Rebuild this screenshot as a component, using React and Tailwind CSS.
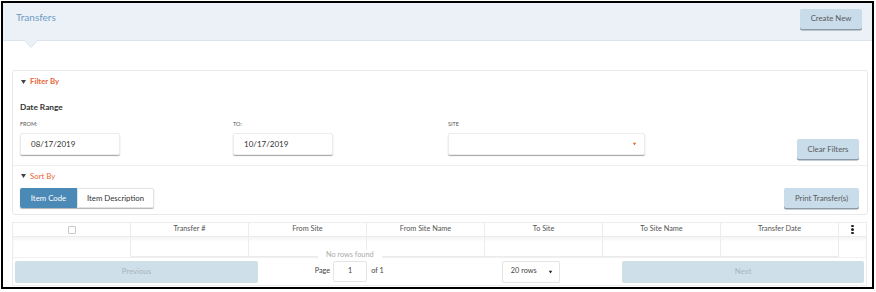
const cols = ["Transfer #", "From Site", "From Site Name", "To Site", "To Site Name", "Transfer Date"]

const Caret = ({ className }) => (
  <svg width="5" height="4" viewBox="0 0 5 4" className={className}>
    <path d="M0 0 L5 0 L2.5 4 Z" fill="currentColor" />
  </svg>
)

const App = () => {
  return (
    <div className="w-[876px] h-[292px] bg-white pl-px pt-px font-['Lato','Liberation_Sans',sans-serif]">
      <div className="w-[873px] h-[288px] border-2 border-black flex flex-col overflow-hidden">
        {/* page header */}
        <div className="h-[38px] shrink-0 bg-[#ebf1f6] border-b border-[#d9e4ee] flex items-start justify-between pl-[13px] pr-[10px] pt-[6px]">
          <span className="text-[10px] text-[#6b9cc6] mt-[1px]">Transfers</span>
          <button className="w-[62px] h-[20px] bg-[#c8dcea] rounded-[2px] shadow-[0_1.5px_0_#8c9aa6] text-[7.8px] text-[#5a5a5a]">
            Create New
          </button>
        </div>
        <div className="h-[29px] shrink-0 relative">
          <svg width="14" height="8" viewBox="0 0 14 8" className="absolute left-[21px] -top-px">
            <path d="M0 0 L7 7.5 L14 0" fill="#ebf1f6" stroke="#d9e4ee" strokeWidth="1" />
          </svg>
        </div>

        {/* filter card */}
        <div className="ml-[9px] w-[856px] h-[145px] shrink-0 border border-[#e6e8ea] rounded-[3px] flex flex-col">
          <div className="flex items-center gap-[4px] pl-[8px] pt-[6px] h-[16px] text-[#e8673b]">
            <Caret className="text-[#444]" />
            <span className="text-[7.8px] font-bold">Filter By</span>
          </div>
          <div className="pl-[7px] pt-[14px] text-[8.3px] font-bold text-[#333]">Date Range</div>
          <div className="flex pl-[7px] pt-[7px] pr-[8px]">
            <div className="w-[213px]">
              <div className="text-[5.5px] text-[#555] h-[13px] leading-[8px]">FROM:</div>
              <div className="w-[100px] h-[22px] border border-[#ececec] shadow-[0_1px_1px_rgba(0,0,0,0.35)] rounded-[2px] flex items-center pl-[10px] text-[8px] text-[#333]">
                08/17/2019
              </div>
            </div>
            <div className="w-[215px]">
              <div className="text-[5.5px] text-[#555] h-[13px] leading-[8px]">TO:</div>
              <div className="w-[100px] h-[22px] border border-[#ececec] shadow-[0_1px_1px_rgba(0,0,0,0.35)] rounded-[2px] flex items-center pl-[10px] text-[8px] text-[#333]">
                10/17/2019
              </div>
            </div>
            <div className="w-[197px]">
              <div className="text-[5.5px] text-[#555] h-[13px] leading-[8px]">SITE</div>
              <div className="w-[197px] h-[22px] border border-[#ececec] shadow-[0_1px_1px_rgba(0,0,0,0.35)] rounded-[2px] flex items-center justify-end pr-[7px]">
                <Caret className="text-[#e8673b] scale-75" />
              </div>
            </div>
            <div className="flex-1 flex justify-end items-end">
              <button className="w-[62px] h-[20px] mb-[-4px] bg-[#c8dcea] rounded-[2px] shadow-[0_1.5px_0_#8c9aa6] text-[7.8px] text-[#5a5a5a]">
                Clear Filters
              </button>
            </div>
          </div>
          <div className="mt-[10px] border-t border-[#eeeeee]" />
          <div className="flex items-center gap-[4px] pl-[8px] pt-[5px] h-[15px] text-[#e8673b]">
            <Caret className="text-[#444]" />
            <span className="text-[7.8px]">Sort By</span>
          </div>
          <div className="flex items-center justify-between pl-[7px] pr-[8px] pt-[7px]">
            <div className="flex h-[20px] shadow-[0_1px_1px_rgba(0,0,0,0.3)] rounded-[2px]">
              <div className="w-[57px] bg-[#4b89b7] text-white text-[7.8px] flex items-center justify-center rounded-l-[2px]">
                Item Code
              </div>
              <div className="w-[77px] border border-[#e2e2e2] text-[#333] text-[7.8px] flex items-center justify-center rounded-r-[2px]">
                Item Description
              </div>
            </div>
            <button className="w-[75px] h-[20px] bg-[#c8dcea] rounded-[2px] shadow-[0_1.5px_0_#8c9aa6] text-[7.8px] text-[#5a5a5a]">
              Print Transfer(s)
            </button>
          </div>
        </div>

        {/* table */}
        <div className="ml-[9px] mt-[7px] w-[855px] border border-[#ececec] flex flex-col">
          <div className="flex h-[14px] border-b border-[#ececec]">
            <div className="w-[118px] border-r border-[#ececec] flex items-center justify-center">
              <div className="w-[8px] h-[8px] border border-[#c8c8c8] rounded-[1px]" />
            </div>
            {cols.map((c) => (
              <div key={c} className="w-[118px] border-r border-[#ececec] flex items-center justify-center text-[7.3px] text-[#555]">
                {c}
              </div>
            ))}
            <div className="flex-1 flex flex-col items-center justify-center gap-[1px]">
              <div className="w-[2.5px] h-[2.5px] rounded-full bg-[#222]" />
              <div className="w-[2.5px] h-[2.5px] rounded-full bg-[#222]" />
              <div className="w-[2.5px] h-[2.5px] rounded-full bg-[#222]" />
            </div>
          </div>
          <div className="relative flex h-[20px] shadow-[inset_0_3px_3px_rgba(0,0,0,0.04)]">
            <div className="w-[118px] border-r border-[#ececec]" />
            {cols.map((c) => (
              <div key={c} className="w-[118px] border-r border-b border-[#ececec]" />
            ))}
            <div className="flex-1" />
            <div className="absolute left-[305px] top-[13px] px-[8px] bg-white text-[7.3px] text-[#aaa] leading-[9px]">
              No rows found
            </div>
          </div>
          <div className="flex items-center h-[28px] px-[2px] border-t border-[#f0f0f0]">
            <div className="w-[243px] h-[22px] bg-[#cfdfe9] rounded-[2px] flex items-center justify-center text-[7.8px] text-[#a9b3bb]">
              Previous
            </div>
            <div className="w-[365px] flex items-center">
              <span className="ml-[57px] text-[7.3px] text-[#444]">Page</span>
              <div className="ml-[3px] w-[34px] h-[21px] border border-[#e4e4e4] rounded-[2px] flex items-center justify-center text-[7.3px] text-[#444]">
                1
              </div>
              <span className="ml-[4px] text-[7.3px] text-[#444]">of 1</span>
              <div className="ml-[118px] w-[58px] h-[22px] border border-[#e4e4e4] rounded-[2px] flex items-center justify-between pl-[8px] pr-[6px] text-[7.3px] text-[#444]">
                20 rows
                <Caret className="text-[#222] scale-75" />
              </div>
            </div>
            <div className="w-[242px] h-[22px] bg-[#cfdfe9] rounded-[2px] flex items-center justify-center text-[7.8px] text-[#a9b3bb]">
              Next
            </div>
          </div>
        </div>
      </div>
    </div>
  )
}

export default App
